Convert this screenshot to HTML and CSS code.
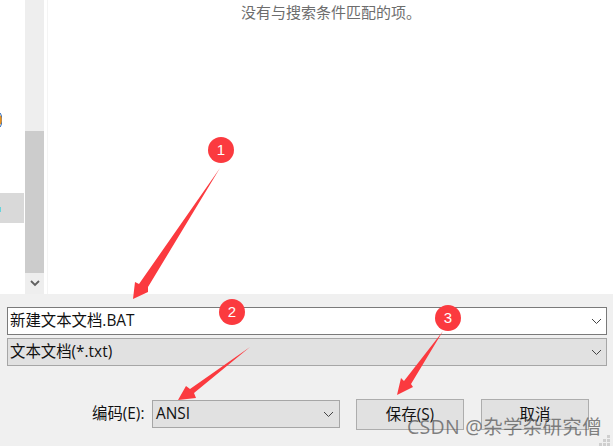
FILE: index.html
```html
<!DOCTYPE html>
<html lang="en">
<head>
    <meta charset="UTF-8">
    <title>另存为</title>
    <link rel="stylesheet" href="styles.css">
</head>
<body>
    <div class="dialog">
        <div class="browser">
            <div class="tree">
                <div class="tree-top">
                    <svg class="tree-icon" width="2" height="14" viewBox="0 0 2 14">
                        <path d="M0 0 C2.4 3 2.4 11 0 14" fill="none" stroke="#1c5fb8" stroke-width="1"/>
                        <path d="M0 3 C1 5 1 9 0 11" fill="none" stroke="#e8901c" stroke-width="2"/>
                    </svg>
                </div>
                <div class="tree-row">
                    <span class="tree-dot"></span>
                </div>
            </div>
            <div class="scrollbar">
                <div class="track"></div>
                <div class="thumb"></div>
                <div class="arrow-btn">
                    <svg width="10" height="7" viewBox="0 0 10 7"><path d="M1 1 L5 5 L9 1" fill="none" stroke="#606060" stroke-width="1.8"/></svg>
                </div>
            </div>
            <div class="results">
                <p class="empty">没有与搜索条件匹配的项。</p>
            </div>
        </div>

        <div class="panel">
            <div class="combo combo-name">
                <span>新建文本文档.BAT</span>
                <svg class="chev" width="11" height="7" viewBox="0 0 11 7"><path d="M1 1 L5.5 5.5 L10 1" fill="none" stroke="#444" stroke-width="1"/></svg>
            </div>
            <div class="combo combo-type">
                <span>文本文档(*.txt)</span>
                <svg class="chev" width="11" height="7" viewBox="0 0 11 7"><path d="M1 1 L5.5 5.5 L10 1" fill="none" stroke="#444" stroke-width="1"/></svg>
            </div>
            <div class="actions">
                <label class="enc-label">编码(E):</label>
                <div class="combo combo-enc">
                    <span>ANSI</span>
                    <svg class="chev" width="11" height="7" viewBox="0 0 11 7"><path d="M1 1 L5.5 5.5 L10 1" fill="none" stroke="#444" stroke-width="1"/></svg>
                </div>
                <button class="btn btn-save">保存(S)</button>
                <button class="btn btn-cancel">取消</button>
            </div>
        </div>

        <!-- annotations drawn on top of the dialog -->
        <svg class="marks" width="613" height="446" viewBox="0 0 613 446">
            <path class="arrow" d="M220 168 L148 287 L148 292 L133 299 L135 282 L139 284 Z"/>
            <path class="arrow" d="M250 347 L194 393 L196 398 L178 400 L186 386 L190 389 Z"/>
            <path class="arrow" d="M443 331 L411 384 L413 387 L397 395 L401 378 L404 381 Z"/>
            <g class="grip">
                <rect x="607" y="435" width="3" height="3"/>
                <rect x="603" y="439" width="3" height="3"/>
                <rect x="607" y="439" width="3" height="3"/>
                <rect x="599" y="443" width="3" height="3"/>
                <rect x="603" y="443" width="3" height="3"/>
                <rect x="607" y="443" width="3" height="3"/>
            </g>
        </svg>
        <div class="badge badge-1">1</div>
        <div class="badge badge-2">2</div>
        <div class="badge badge-3">3</div>
        <div class="watermark">CSDN @杂学杂研究僧</div>
    </div>
</body>
</html>
```

FILE: styles.css
```css
html, body {
    margin: 0;
    padding: 0;
}

body {
    width: 613px;
    height: 446px;
    overflow: hidden;
    font-family: "Open Sans", "Noto Sans CJK SC", sans-serif;
    font-size: 15.4px;
    color: #111;
}

.dialog {
    position: relative;
    width: 613px;
    height: 446px;
    display: flex;
    flex-direction: column;
    background-color: #f0f0f0;
}

.browser {
    height: 294px;
    display: flex;
    background-color: #fff;
}

.tree {
    width: 25px;
    display: flex;
    flex-direction: column;
}

.tree-top {
    height: 193px;
    padding-top: 113px;
    box-sizing: border-box;
}

.tree-icon {
    display: block;
}

.tree-row {
    width: 24px;
    height: 30px;
    background-color: #d9d9d9;
    display: flex;
    align-items: center;
}

.tree-dot {
    width: 1px;
    height: 5px;
    margin-top: 2px;
    background-color: #66d4dc;
}

.scrollbar {
    width: 19px;
    display: flex;
    flex-direction: column;
    background-color: #eeeeee;
}

.track {
    height: 131px;
}

.thumb {
    height: 142px;
    background-color: #cccccc;
}

.arrow-btn {
    height: 21px;
    display: flex;
    align-items: center;
    justify-content: center;
}

.results {
    flex: 1;
    margin-left: 3px;
    border-left: 1px solid #f4f4f4;
}

.empty {
    margin: 2px 0 0;
    padding-left: 193px;
    font-size: 15px;
    line-height: 20px;
    color: #6d6d6d;
}

.panel {
    flex: 1;
    padding: 13px 6px 0 7px;
    display: flex;
    flex-direction: column;
    gap: 3px;
}

.combo {
    box-sizing: border-box;
    height: 28px;
    border: 1px solid #a6a6a6;
    background-color: #e1e1e1;
    display: flex;
    align-items: center;
    justify-content: space-between;
    padding: 0 3px 0 2px;
    line-height: 20px;
}

.combo span {
    margin-top: -1px;
}

.combo-name {
    background-color: #fff;
    border-color: #7a7a7a;
}

.chev {
    margin-right: 1px;
}

.actions {
    display: flex;
    align-items: flex-start;
    margin-top: 30px;
    padding-left: 85px;
}

.enc-label {
    width: 60px;
    line-height: 29px;
}

.combo-enc {
    width: 188px;
    margin-top: 1px;
    padding-left: 3px;
    padding-right: 4px;
}

.btn {
    box-sizing: border-box;
    width: 108px;
    height: 31px;
    border: 1px solid #adadad;
    background-color: #e1e1e1;
    font-family: inherit;
    font-size: 15.4px;
    color: #111;
    padding: 0 0 2px;
}

.btn-save {
    margin-left: 16px;
}

.btn-cancel {
    margin-left: 17px;
}

.marks {
    position: absolute;
    left: 0;
    top: 0;
}

.arrow {
    fill: #fb3a3f;
}

.grip {
    fill: #cfcfcf;
}

.badge {
    position: absolute;
    width: 26px;
    height: 26px;
    border-radius: 50%;
    background-color: #fb3a3f;
    color: #fff;
    font-family: "Liberation Sans", sans-serif;
    font-size: 15px;
    line-height: 25px;
    text-align: center;
}

.badge-1 { left: 208px; top: 137px; }
.badge-2 { left: 219px; top: 299px; }
.badge-3 { left: 435px; top: 305px; }

.watermark {
    position: absolute;
    left: 407px;
    top: 414px;
    font-size: 19.5px;
    letter-spacing: 0.3px;
    line-height: 26px;
    color: rgba(90, 90, 90, 0.75);
    white-space: nowrap;
}
```
